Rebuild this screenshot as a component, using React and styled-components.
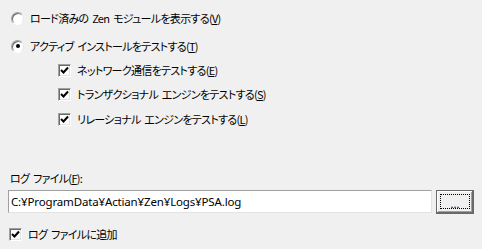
import React from "react";
import styled, { createGlobalStyle } from "styled-components";

const Global = createGlobalStyle`
  html, body { margin: 0; padding: 0; background: #f0f0f0; }
  body {
    width: 482px; height: 249px; overflow: hidden;
    font-family: "Noto Sans CJK JP", "Noto Sans", sans-serif;
    font-size: 11px; color: #000;
    font-feature-settings: "palt";
  }
`;

const Page = styled.div`
  width: 482px;
  height: 249px;
  display: flex;
  flex-direction: column;
  box-sizing: border-box;
  padding: 0 8px 0 8px;
`;

const Row = styled.div`
  display: flex;
  align-items: center;
  height: 18px;
  margin-top: ${(p) => p.$top}px;
  padding-left: ${(p) => p.$indent}px;
  gap: ${(p) => p.$gap}px;
  white-space: nowrap;
  line-height: 18px;
  flex: none;
`;

const RadioCircle = styled.span`
  width: 13px;
  height: 13px;
  box-sizing: border-box;
  border-radius: 50%;
  border: 1px solid;
  border-color: #a0a0a0 #e8e8e8 #ffffff #a0a0a0;
  box-shadow: inset 1px 1px 0 #696969;
  background: #fff;
  display: flex;
  align-items: center;
  justify-content: center;
  flex: none;
  &::after {
    content: "";
    display: ${(p) => (p.$checked ? "block" : "none")};
    width: 4px;
    height: 4px;
    border-radius: 50%;
    background: #000;
  }
`;

const Box = styled.span`
  width: 13px;
  height: 13px;
  box-sizing: border-box;
  border: 1px solid;
  border-color: #a0a0a0 #ffffff #ffffff #a0a0a0;
  box-shadow: inset 1px 1px 0 #696969, inset -1px -1px 0 #e3e3e3;
  background: #fff;
  display: flex;
  align-items: center;
  justify-content: center;
  flex: none;
`;

const Label = styled.span`
  display: inline-block;
  letter-spacing: -0.7px;
  word-spacing: 2px;
`;

const Key = styled.span`
  text-decoration: underline;
  text-underline-offset: 1px;
`;

const FieldRow = styled.div`
  display: flex;
  align-items: flex-start;
  margin-top: 3px;
  gap: 4px;
  flex: none;
`;

const TextBox = styled.div`
  width: 424px;
  height: 23px;
  box-sizing: border-box;
  background: #fff;
  border: 1px solid;
  border-color: #a0a0a0 #e3e3e3 #e3e3e3 #a0a0a0;
  padding: 0 2px;
  display: flex;
  align-items: center;
  font-family: "Noto Sans", "Noto Sans CJK JP", sans-serif;
  font-size: 11.5px;
  letter-spacing: -0.15px;
  white-space: nowrap;
`;

const Button = styled.div`
  width: 38px;
  height: 24px;
  box-sizing: border-box;
  border: 1px solid #696969;
  box-shadow: inset -1px -1px 0 #696969, inset 1px 1px 0 #fff, inset -2px -2px 0 #a0a0a0;
  background: #f0f0f0;
  padding: 3px 3px 4px 3px;
  display: flex;
`;

const Focus = styled.div`
  flex: 1;
  border: 1px dotted #000;
  display: flex;
  align-items: center;
  justify-content: center;
  font-size: 11px;
  line-height: 1;
  padding-top: 3px;
  font-family: "Noto Sans", sans-serif;
`;

const Check = () => (
  <svg width="9" height="9" viewBox="0 0 9 9">
    <path d="M1 4 L3.5 6.5 L8 1.5" fill="none" stroke="#000" strokeWidth="2" />
  </svg>
);

const Text = ({ before, k, after = "" }) => (
  <Label>
    {before}(<Key>{k}</Key>){after}
  </Label>
);

export default function App() {
  return (
    <>
      <Global />
      <Page>
        <Row $top={9} $indent={3} $gap={6}>
          <RadioCircle />
          <Text before="ロード済みの Zen モジュールを表示する" k="V" />
        </Row>
        <Row $top={10} $indent={3} $gap={6}>
          <RadioCircle $checked />
          <Text before="アクティブ インストールをテストする" k="T" />
        </Row>
        <Row $top={6} $indent={50} $gap={6}>
          <Box><Check /></Box>
          <Text before="ネットワーク通信をテストする" k="E" />
        </Row>
        <Row $top={6} $indent={50} $gap={6}>
          <Box><Check /></Box>
          <Text before="トランザクショナル エンジンをテストする" k="S" />
        </Row>
        <Row $top={7} $indent={50} $gap={6}>
          <Box><Check /></Box>
          <Text before="リレーショナル エンジンをテストする" k="L" />
        </Row>
        <Row $top={41} $indent={2} $gap={0}>
          <Text before="ログ ファイル" k="F" after=":" />
        </Row>
        <FieldRow>
          <TextBox>C:¥ProgramData¥Actian¥Zen¥Logs¥PSA.log</TextBox>
          <Button><Focus>...</Focus></Button>
        </FieldRow>
        <Row $top={11} $indent={1} $gap={6}>
          <Box><Check /></Box>
          <Label>ログ ファイルに追加</Label>
        </Row>
      </Page>
    </>
  );
}
